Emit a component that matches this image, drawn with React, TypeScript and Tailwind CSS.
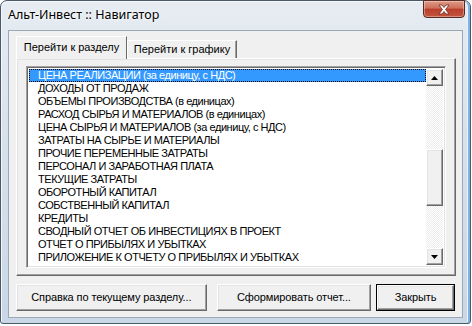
import React from 'react';

const ROWS = [
  'ЦЕНА РЕАЛИЗАЦИИ (за единицу, с НДС)',
  'ДОХОДЫ ОТ ПРОДАЖ',
  'ОБЪЕМЫ ПРОИЗВОДСТВА (в единицах)',
  'РАСХОД СЫРЬЯ И МАТЕРИАЛОВ (в единицах)',
  'ЦЕНА СЫРЬЯ И МАТЕРИАЛОВ (за единицу, с НДС)',
  'ЗАТРАТЫ НА СЫРЬЕ И МАТЕРИАЛЫ',
  'ПРОЧИЕ ПЕРЕМЕННЫЕ ЗАТРАТЫ',
  'ПЕРСОНАЛ И ЗАРАБОТНАЯ ПЛАТА',
  'ТЕКУЩИЕ ЗАТРАТЫ',
  'ОБОРОТНЫЙ КАПИТАЛ',
  'СОБСТВЕННЫЙ КАПИТАЛ',
  'КРЕДИТЫ',
  'СВОДНЫЙ ОТЧЕТ ОБ ИНВЕСТИЦИЯХ В ПРОЕКТ',
  'ОТЧЕТ О ПРИБЫЛЯХ И УБЫТКАХ',
  'ПРИЛОЖЕНИЕ К ОТЧЕТУ О ПРИБЫЛЯХ И УБЫТКАХ',
];

// classic 3d raised edge
const raised =
  'border border-t-white border-l-white border-r-[#696969] border-b-[#696969] shadow-[inset_-1px_-1px_0_#a0a0a0,inset_1px_1px_0_#e3e3e3] bg-[#f0f0f0]';

function Arrow({ up }: { up?: boolean }) {
  return (
    <div className={`flex h-[17px] w-[17px] items-center justify-center ${raised}`}>
      <svg width="7" height="4" viewBox="0 0 7 4">
        <path d={up ? 'M0 4 L3.5 0 L7 4 Z' : 'M0 0 L7 0 L3.5 4 Z'} fill="#000" />
      </svg>
    </div>
  );
}

function Btn({ label, width, isDefault }: { label: string; width: string; isDefault?: boolean }) {
  return (
    <div className={`h-[27px] ${width} ${isDefault ? 'border border-black' : ''}`}>
      <div className={`flex h-full w-full items-center justify-center ${raised}`}>
        <span className="text-[11px] tracking-[-0.1px] text-black">{label}</span>
      </div>
    </div>
  );
}

export default function App() {
  return (
    <div
      className="relative h-[326px] w-[472px] overflow-hidden bg-white"
      style={{ fontFamily: '"Liberation Sans", Arial, sans-serif' }}
    >
      <div className="flex h-[324px] w-[471px] flex-col rounded-t-[7px] rounded-b-[3px] border border-[#4b5868] bg-[linear-gradient(180deg,#e6ecf2_0%,#d9e2eb_40%,#c9d7e6_100%)] shadow-[inset_1px_1px_0_#f4f8fc,inset_-2px_0_0_#7fb3e0,inset_-3px_0_0_#e8f2fb]">
        {/* title bar */}
        <div className="relative flex h-[29px] items-center pl-[7px]">
          <span
            className="text-[12.5px] text-black [text-shadow:0_0_6px_#fff,0_0_3px_#fff]"
            style={{ fontFamily: '"Noto Sans", "Open Sans", sans-serif' }}
          >
            Альт-Инвест :: Навигатор
          </span>
          <div className="absolute right-[5px] top-[-1px] flex h-[18px] w-[42px] items-center justify-center rounded-b-[4px] border border-[#5a2a22] bg-[linear-gradient(180deg,#dc9a86_0%,#cf6f5a_45%,#bb3f2b_50%,#c2553f_100%)] shadow-[inset_0_0_0_1px_rgba(255,255,255,0.35)]">
            <svg width="14" height="11" viewBox="0 0 14 11">
              <path
                d="M2 1 L5 1 L7 3.5 L9 1 L12 1 L8.6 5.5 L12 10 L9 10 L7 7.5 L5 10 L2 10 L5.4 5.5 Z"
                fill="#fff"
                stroke="#6a2a1e"
                strokeWidth="0.8"
              />
            </svg>
          </div>
        </div>

        {/* client area */}
        <div className="mx-[7px] flex h-[288px] flex-col border border-[#9aa8b8] bg-[#f0f0f0] px-[7px] pt-[5px]">
          {/* tabs */}
          <div className="flex h-[22px] items-end">
            <div className="relative z-10 -mb-px flex h-[23px] w-[111px] items-center justify-center border border-b-0 border-t-white border-l-white border-r-[#696969] bg-[#f0f0f0] pb-[2px]">
              <span className="text-[11px] text-black">Перейти к разделу</span>
            </div>
            <div className="flex h-[18px] w-[110px] items-center justify-center border border-b-0 border-t-white border-l-white border-r-[#696969] shadow-[inset_-1px_0_0_#a0a0a0]">
              <span className="text-[11px] text-black">Перейти к графику</span>
            </div>
          </div>

          {/* panel */}
          <div className={`h-[218px] w-[440px] pl-[9px] pt-[7px] ${raised}`}>
            {/* list box */}
            <div className="flex h-[202px] w-[420px] border border-t-[#a0a0a0] border-l-[#a0a0a0] border-r-white border-b-white bg-white p-[2px] shadow-[inset_1px_1px_0_#696969,inset_-1px_-1px_0_#e3e3e3]">
              <div className="flex-1 overflow-hidden">
                {ROWS.map((r, i) => (
                  <div
                    key={r}
                    className={`flex h-[13px] items-center whitespace-nowrap pl-[9px] text-[11px] leading-[13px] tracking-[-0.45px] ${
                      i === 0
                        ? 'bg-[#3399ff] text-white outline-1 -outline-offset-1 outline-dotted outline-black'
                        : 'text-black'
                    }`}
                  >
                    {r}
                  </div>
                ))}
              </div>
              {/* scrollbar */}
              <div className="flex w-[17px] flex-col bg-[image:repeating-conic-gradient(#ffffff_0_25%,#ececec_0_50%)] bg-[length:2px_2px]">
                <Arrow up />
                <div className="h-[63px]" />
                <div className={`h-[57px] w-[17px] ${raised}`} />
                <div className="flex-1" />
                <Arrow />
              </div>
            </div>
          </div>

          {/* buttons */}
          <div className="mt-[8px] flex items-center">
            <Btn label="Справка по текущему разделу..." width="w-[191px]" />
            <div className="w-[10px]" />
            <Btn label="Сформировать отчет..." width="w-[155px]" />
            <div className="w-[5px]" />
            <Btn label="Закрыть" width="w-[79px]" isDefault />
          </div>
        </div>
      </div>
    </div>
  );
}
